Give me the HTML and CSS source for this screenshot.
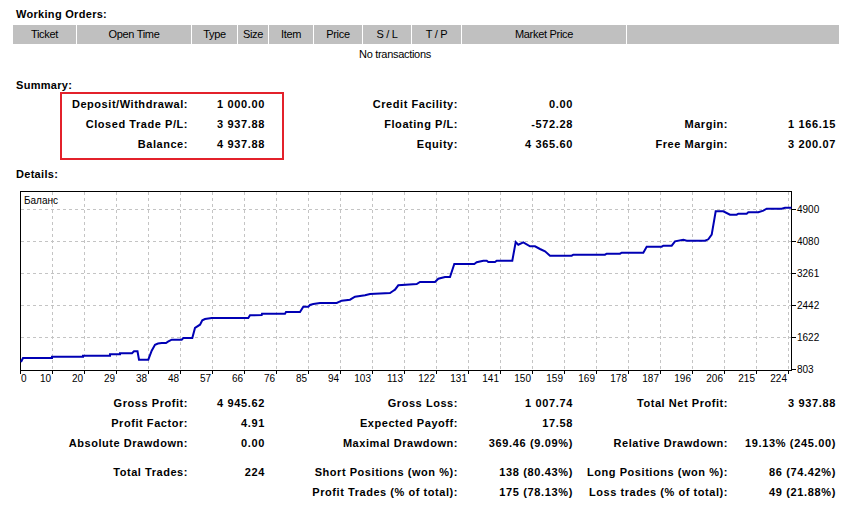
FILE: index.html
```html
<!DOCTYPE html>
<html>
<head>
<meta charset="utf-8">
<title>Strategy Tester Report</title>
<link rel="stylesheet" href="styles.css">
</head>
<body>
<div class="page">
  <div class="title title-orders">Working Orders:</div>
  <div class="orders-head">
    <div class="cell w-ticket">Ticket</div>
    <div class="cell w-time">Open Time</div>
    <div class="cell w-type">Type</div>
    <div class="cell w-size">Size</div>
    <div class="cell w-item">Item</div>
    <div class="cell w-price">Price</div>
    <div class="cell w-sl">S / L</div>
    <div class="cell w-tp">T / P</div>
    <div class="cell w-market">Market Price</div>
    <div class="cell w-rest"></div>
  </div>
  <div class="no-rows">No transactions</div>

  <div class="title title-summary">Summary:</div>
  <div class="grid summary">
    <div class="l">Deposit/Withdrawal:</div><div class="v">1 000.00</div>
    <div class="l">Credit Facility:</div><div class="v">0.00</div>
    <div class="l"></div><div class="v"></div>

    <div class="l">Closed Trade P/L:</div><div class="v">3 937.88</div>
    <div class="l">Floating P/L:</div><div class="v">-572.28</div>
    <div class="l">Margin:</div><div class="v">1 166.15</div>

    <div class="l">Balance:</div><div class="v">4 937.88</div>
    <div class="l">Equity:</div><div class="v">4 365.60</div>
    <div class="l">Free Margin:</div><div class="v">3 200.07</div>
    <div class="highlight"></div>
  </div>

  <div class="title title-details">Details:</div>
  <svg class="chart" width="852" height="200" viewBox="0 188 852 200" xmlns="http://www.w3.org/2000/svg">
    <rect x="20" y="191" width="772" height="179" fill="#ffffff"/>
    <g class="grid-h" stroke="#c4c4c4" stroke-width="1" stroke-dasharray="3 3" shape-rendering="crispEdges">
      <line x1="21" y1="209.5" x2="791" y2="209.5"/>
      <line x1="21" y1="241.5" x2="791" y2="241.5"/>
      <line x1="21" y1="273.5" x2="791" y2="273.5"/>
      <line x1="21" y1="305.5" x2="791" y2="305.5"/>
      <line x1="21" y1="337.5" x2="791" y2="337.5"/>
    </g>
    <g class="grid-v" stroke="#c4c4c4" stroke-width="1" stroke-dasharray="3 3" shape-rendering="crispEdges">
      <line x1="52.5" y1="192" x2="52.5" y2="370"/>
      <line x1="84.5" y1="192" x2="84.5" y2="370"/>
      <line x1="116.5" y1="192" x2="116.5" y2="370"/>
      <line x1="148.5" y1="192" x2="148.5" y2="370"/>
      <line x1="180.5" y1="192" x2="180.5" y2="370"/>
      <line x1="212.5" y1="192" x2="212.5" y2="370"/>
      <line x1="244.5" y1="192" x2="244.5" y2="370"/>
      <line x1="276.5" y1="192" x2="276.5" y2="370"/>
      <line x1="308.5" y1="192" x2="308.5" y2="370"/>
      <line x1="340.5" y1="192" x2="340.5" y2="370"/>
      <line x1="372.5" y1="192" x2="372.5" y2="370"/>
      <line x1="404.5" y1="192" x2="404.5" y2="370"/>
      <line x1="436.5" y1="192" x2="436.5" y2="370"/>
      <line x1="468.5" y1="192" x2="468.5" y2="370"/>
      <line x1="500.5" y1="192" x2="500.5" y2="370"/>
      <line x1="532.5" y1="192" x2="532.5" y2="370"/>
      <line x1="564.5" y1="192" x2="564.5" y2="370"/>
      <line x1="596.5" y1="192" x2="596.5" y2="370"/>
      <line x1="628.5" y1="192" x2="628.5" y2="370"/>
      <line x1="660.5" y1="192" x2="660.5" y2="370"/>
      <line x1="692.5" y1="192" x2="692.5" y2="370"/>
      <line x1="724.5" y1="192" x2="724.5" y2="370"/>
      <line x1="756.5" y1="192" x2="756.5" y2="370"/>
      <line x1="788.5" y1="192" x2="788.5" y2="370"/>
    </g>
    <rect x="20.5" y="191.5" width="771" height="178.5" fill="none" stroke="#000000" stroke-width="1" shape-rendering="crispEdges"/>
    <g class="ticks" stroke="#000000" stroke-width="1" shape-rendering="crispEdges">
      <line x1="792" y1="209.5" x2="796" y2="209.5"/>
      <line x1="792" y1="241.5" x2="796" y2="241.5"/>
      <line x1="792" y1="273.5" x2="796" y2="273.5"/>
      <line x1="792" y1="305.5" x2="796" y2="305.5"/>
      <line x1="792" y1="337.5" x2="796" y2="337.5"/>
      <line x1="792" y1="369.5" x2="796" y2="369.5"/>
      <line x1="20.5" y1="370" x2="20.5" y2="374"/>
      <line x1="52.5" y1="370" x2="52.5" y2="374"/>
      <line x1="84.5" y1="370" x2="84.5" y2="374"/>
      <line x1="116.5" y1="370" x2="116.5" y2="374"/>
      <line x1="148.5" y1="370" x2="148.5" y2="374"/>
      <line x1="180.5" y1="370" x2="180.5" y2="374"/>
      <line x1="212.5" y1="370" x2="212.5" y2="374"/>
      <line x1="244.5" y1="370" x2="244.5" y2="374"/>
      <line x1="276.5" y1="370" x2="276.5" y2="374"/>
      <line x1="308.5" y1="370" x2="308.5" y2="374"/>
      <line x1="340.5" y1="370" x2="340.5" y2="374"/>
      <line x1="372.5" y1="370" x2="372.5" y2="374"/>
      <line x1="404.5" y1="370" x2="404.5" y2="374"/>
      <line x1="436.5" y1="370" x2="436.5" y2="374"/>
      <line x1="468.5" y1="370" x2="468.5" y2="374"/>
      <line x1="500.5" y1="370" x2="500.5" y2="374"/>
      <line x1="532.5" y1="370" x2="532.5" y2="374"/>
      <line x1="564.5" y1="370" x2="564.5" y2="374"/>
      <line x1="596.5" y1="370" x2="596.5" y2="374"/>
      <line x1="628.5" y1="370" x2="628.5" y2="374"/>
      <line x1="660.5" y1="370" x2="660.5" y2="374"/>
      <line x1="692.5" y1="370" x2="692.5" y2="374"/>
      <line x1="724.5" y1="370" x2="724.5" y2="374"/>
      <line x1="756.5" y1="370" x2="756.5" y2="374"/>
      <line x1="788.5" y1="370" x2="788.5" y2="374"/>
    </g>
    <text class="chart-label" x="24" y="203.5">Баланс</text>
    <g class="chart-label">
      <text x="797" y="213">4900</text>
      <text x="797" y="245">4080</text>
      <text x="797" y="277">3261</text>
      <text x="797" y="309">2442</text>
      <text x="797" y="341">1622</text>
      <text x="797" y="373">803</text>
    </g>
    <g class="chart-label">
      <text x="21" y="382">0</text>
    </g>
    <g class="chart-label" text-anchor="end">
      <text x="51" y="382">10</text>
      <text x="83" y="382">20</text>
      <text x="115" y="382">29</text>
      <text x="147" y="382">38</text>
      <text x="179" y="382">48</text>
      <text x="211" y="382">57</text>
      <text x="243" y="382">66</text>
      <text x="275" y="382">76</text>
      <text x="307" y="382">85</text>
      <text x="339" y="382">94</text>
      <text x="371" y="382">103</text>
      <text x="403" y="382">113</text>
      <text x="435" y="382">122</text>
      <text x="467" y="382">131</text>
      <text x="499" y="382">141</text>
      <text x="531" y="382">150</text>
      <text x="563" y="382">159</text>
      <text x="595" y="382">169</text>
      <text x="627" y="382">178</text>
      <text x="659" y="382">187</text>
      <text x="691" y="382">196</text>
      <text x="723" y="382">206</text>
      <text x="755" y="382">215</text>
      <text x="787" y="382">224</text>
    </g>
    <polyline fill="none" stroke="#0000b4" stroke-width="2" stroke-linejoin="miter"
      points="21,362 23,358 52,358 52,356.7 83,356.7 83,355.7 110,355.7 110,354.3 120,354.3 120,353.3 132,353.3 134,351.3 137.5,351.3 139,359.7 148.3,359.7 151.7,350.7 155,344.7 158,343.5 161.7,343 166,343 168,341.7 171.7,339.7 181.7,339.7 183.3,338 192.3,338 195,328 200,324.7 202.3,320.3 205,319 211.7,318 248.3,318 250,315.3 261.7,315 262,313.7 285,313.7 286,312 300,312 303.3,306.7 308.3,306.7 310,305 313.3,304 320,303 336.7,303 341.7,300.7 350,299.7 355,296.7 365,295.3 370,294 390,293 393,291 395,289.7 398.3,285.3 416.7,284 420,282 435,282 438.3,278.7 445,277 450,277 454.3,264 474.3,264 476.7,262.3 483.3,260.7 486.7,260.7 488.3,262 495,262 496.7,260.7 512.3,260.7 515.7,242 518.3,244.7 523.3,242.3 530,246.3 535,246.3 540,249 545,251.3 550,255.7 571.7,255.7 573.3,254.7 605,254.7 606.7,253.7 620,253.7 621.7,252.7 643.3,252.7 646.7,246.7 661.7,246.7 663.3,245.7 671.7,245.7 675,241.3 683.3,239.7 686.7,240.7 705,240.7 708.3,239.3 711.7,234.7 715.7,211.3 723.3,211.3 730,214.7 736.7,214.7 738.3,213.7 746.7,213.7 748.3,212.3 758.3,212.3 763.3,210.7 766.7,208.7 781.7,208.7 785,207.7 791.5,207.7"/>
  </svg>

  <div class="grid stats">
    <div class="l">Gross Profit:</div><div class="v">4 945.62</div>
    <div class="l">Gross Loss:</div><div class="v">1 007.74</div>
    <div class="l">Total Net Profit:</div><div class="v">3 937.88</div>

    <div class="l">Profit Factor:</div><div class="v">4.91</div>
    <div class="l">Expected Payoff:</div><div class="v">17.58</div>
    <div class="l"></div><div class="v"></div>

    <div class="l">Absolute Drawdown:</div><div class="v">0.00</div>
    <div class="l">Maximal Drawdown:</div><div class="v">369.46 (9.09%)</div>
    <div class="l">Relative Drawdown:</div><div class="v">19.13% (245.00)</div>
  </div>
  <div class="grid stats stats-trades">
    <div class="l">Total Trades:</div><div class="v">224</div>
    <div class="l">Short Positions (won %):</div><div class="v">138 (80.43%)</div>
    <div class="l">Long Positions (won %):</div><div class="v">86 (74.42%)</div>

    <div class="l"></div><div class="v"></div>
    <div class="l">Profit Trades (% of total):</div><div class="v">175 (78.13%)</div>
    <div class="l">Loss trades (% of total):</div><div class="v">49 (21.88%)</div>
  </div>
</div>
</body>
</html>
```

FILE: styles.css
```css
html, body {
  margin: 0;
  padding: 0;
  background: #ffffff;
}

body {
  font-family: "Liberation Sans", Arial, sans-serif;
  font-size: 11px;
  color: #000000;
  width: 852px;
  height: 506px;
  overflow: hidden;
}

.page {
  padding-top: 7px;
}

.title {
  font-weight: bold;
  letter-spacing: 0.3px;
  line-height: 14px;
  padding-left: 16px;
}

.orders-head {
  display: flex;
  gap: 1px;
  margin-top: 4px;
  margin-left: 13px;
  height: 19px;
}

.cell {
  background: #c0c0c0;
  line-height: 19px;
  text-align: center;
  letter-spacing: -0.3px;
  flex: none;
}

.w-ticket { width: 63px; }
.w-time { width: 114px; }
.w-type { width: 45px; }
.w-size { width: 30px; }
.w-item { width: 44px; }
.w-price { width: 48px; }
.w-sl { width: 48px; }
.w-tp { width: 49px; }
.w-market { width: 164px; }
.w-rest { width: 212px; }

.no-rows {
  line-height: 21px;
  padding-left: 359px;
  letter-spacing: -0.3px;
}

.title-summary {
  margin-top: 13px;
}

.grid {
  display: grid;
  grid-template-columns: 188px 77px 193px 115px 155px 108px;
  grid-auto-rows: 20px;
  line-height: 20px;
  font-weight: bold;
  white-space: nowrap;
}

.grid .l {
  text-align: right;
  letter-spacing: 0.55px;
}

.grid .v {
  text-align: right;
  letter-spacing: 0.65px;
}

.summary {
  position: relative;
  margin-top: 2px;
}

.highlight {
  position: absolute;
  left: 60px;
  top: -2px;
  width: 224px;
  height: 68px;
  box-sizing: border-box;
  border: 2px solid #e3212b;
}

.title-details {
  margin-top: 13px;
}

.chart {
  display: block;
  margin-top: 7px;
}

.chart-label {
  font-family: "Liberation Sans", Arial, sans-serif;
  font-size: 10px;
  fill: #000000;
}

.stats {
  margin-top: 5px;
}

.stats-trades {
  margin-top: 9px;
}
```
